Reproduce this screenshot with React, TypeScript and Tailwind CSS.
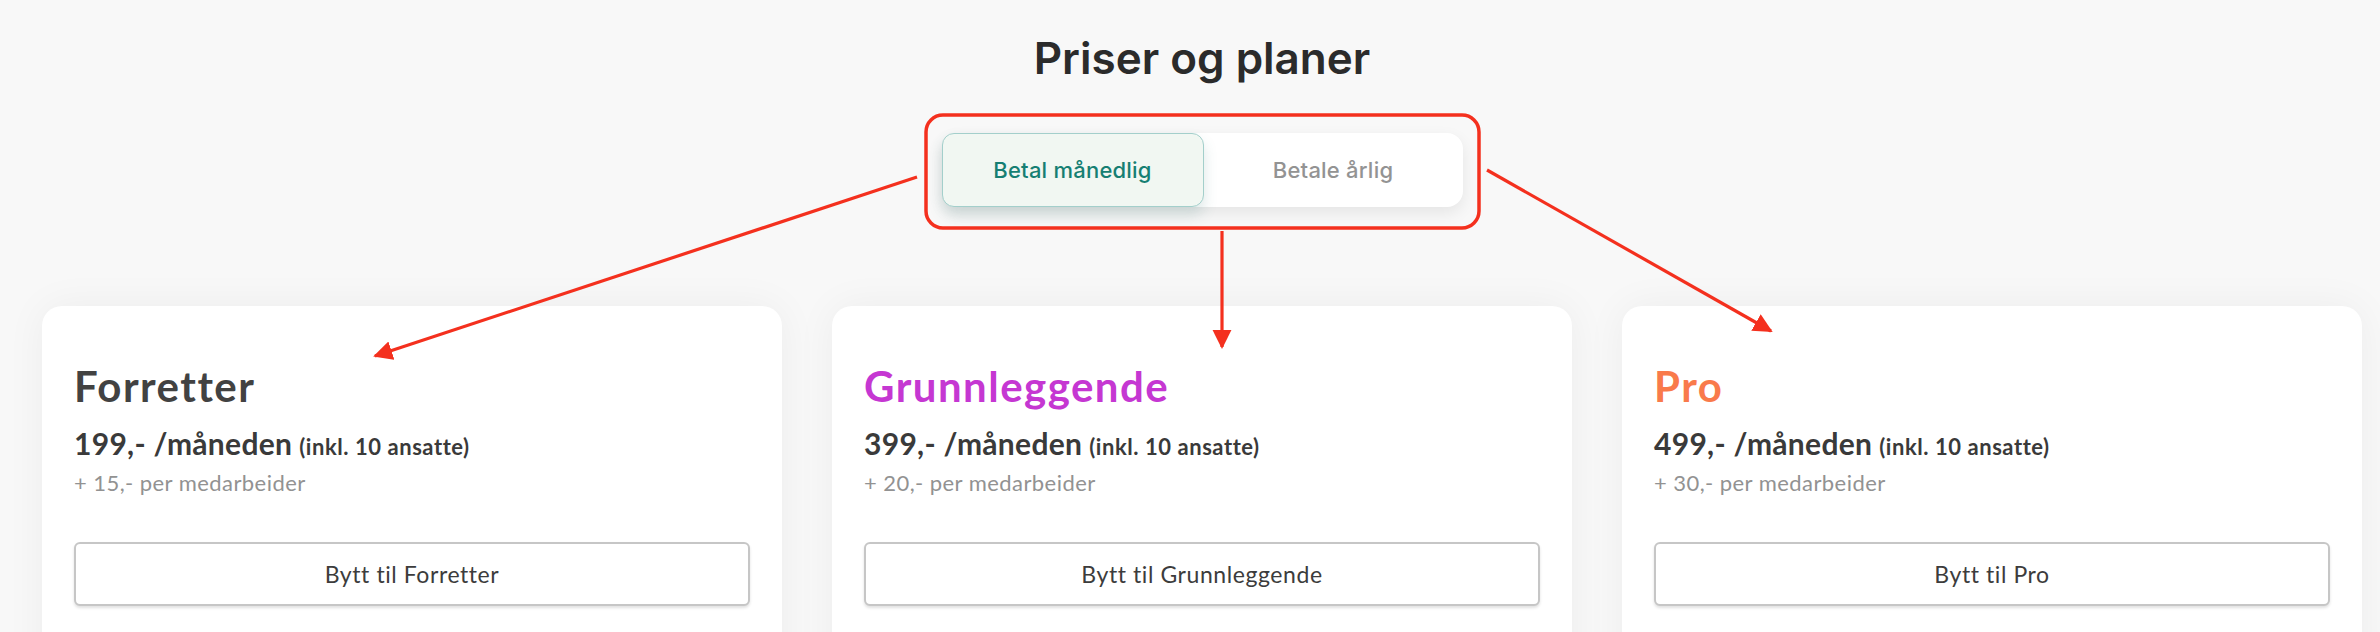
import React from 'react';

const plans = [
  { name: 'Forretter', color: 'text-[#424242]', price: '199,-', extra: '+ 15,- per medarbeider' },
  { name: 'Grunnleggende', color: 'text-[#c537d2]', price: '399,-', extra: '+ 20,- per medarbeider' },
  { name: 'Pro', color: 'text-[#f97a4b]', price: '499,-', extra: '+ 30,- per medarbeider' },
];

function PlanCard({ plan }: { plan: (typeof plans)[number] }) {
  return (
    <div className="flex-1 min-h-[420px] bg-white rounded-[20px] shadow-[0_0_40px_rgba(0,0,0,0.05)] px-8 pt-[59px] font-['Lato',sans-serif]">
      <h2 className={`text-[42px] leading-none font-bold tracking-[0.035em] ${plan.color}`}>{plan.name}</h2>
      <div className="mt-[21px] flex items-baseline gap-[7px] text-[#3a3a3a] leading-none">
        <span className="text-[30px] font-bold tracking-[0.01em]">{plan.price} /måneden</span>
        <span className="text-[22px] font-bold tracking-[0.025em]">(inkl. 10 ansatte)</span>
      </div>
      <p className="mt-[14px] text-[22px] leading-none tracking-[0.02em] text-[#929292]">{plan.extra}</p>
      <button className="mt-[48px] w-full h-[64px] rounded-md border-2 border-[#c6c6c6] bg-white shadow-[0_2px_3px_rgba(0,0,0,0.12)] text-[23px] tracking-[0.025em] text-[#3c3c3c]">
        Bytt til {plan.name}
      </button>
    </div>
  );
}

function Annotations() {
  return (
    <svg className="absolute inset-0 pointer-events-none" width="2380" height="632" viewBox="0 0 2380 632">
      <defs>
        <marker id="head" viewBox="0 0 10 10" refX="9" refY="5" markerWidth="6" markerHeight="6" orient="auto" markerUnits="strokeWidth">
          <path d="M0 0 L10 5 L0 10 z" fill="#f4301e" />
        </marker>
      </defs>
      <rect x="926" y="115" width="553" height="113" rx="17" fill="none" stroke="#f4301e" strokeWidth="3.5" />
      <line x1="917" y1="177" x2="375" y2="356" stroke="#f4301e" strokeWidth="3.2" markerEnd="url(#head)" />
      <line x1="1222" y1="231" x2="1222" y2="347" stroke="#f4301e" strokeWidth="3.2" markerEnd="url(#head)" />
      <line x1="1487" y1="170" x2="1771" y2="331" stroke="#f4301e" strokeWidth="3.2" markerEnd="url(#head)" />
    </svg>
  );
}

export default function App() {
  return (
    <div className="relative h-[632px] overflow-hidden bg-[#f8f8f8]">
      <div className="flex flex-col items-center pt-[36px] pl-[24px]">
        <h1 className="font-['Inter',sans-serif] text-[44px] leading-none font-semibold text-[#2b2b2b]">
          Priser og planer
        </h1>

        {/* Billing toggle */}
        <div className="mt-[53px] flex w-[521px] h-[74px] rounded-2xl bg-white shadow-[0_6px_16px_rgba(0,0,0,0.08)] font-['Inter',sans-serif] text-[22px] font-medium tracking-[0.01em]">
          <button className="w-[262px] h-full rounded-[12px] border-[1.5px] border-[#a3cfcb] bg-[#f1f7f2] text-[#167f73] shadow-[0_8px_14px_rgba(60,120,115,0.18)]">
            Betal månedlig
          </button>
          <button className="flex-1 h-full text-[#939393]">Betale årlig</button>
        </div>
      </div>

      {/* Plans */}
      <div className="mt-[99px] flex gap-[50px] pl-[42px] pr-[18px]">
        {plans.map((p) => (
          <PlanCard key={p.name} plan={p} />
        ))}
      </div>

      <Annotations />
    </div>
  );
}
